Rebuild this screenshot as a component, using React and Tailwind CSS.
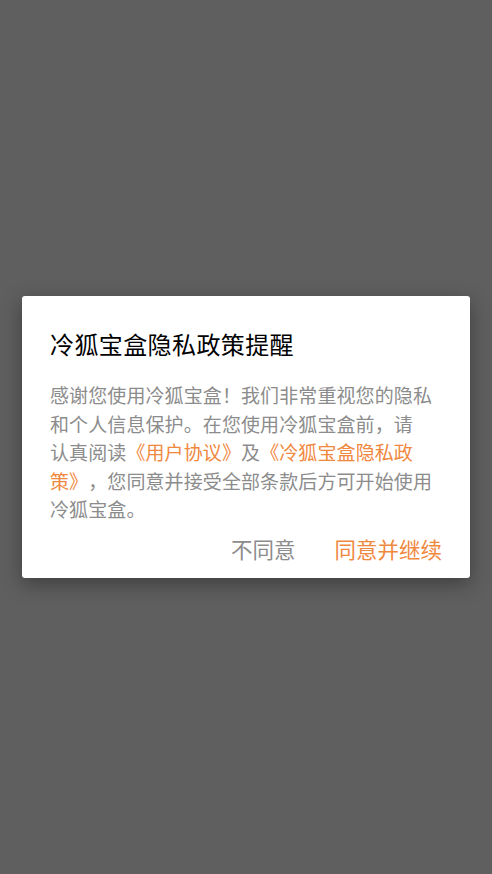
import React from 'react';

const font = { fontFamily: '"Noto Sans CJK SC", "Noto Sans", sans-serif' };

export default function App() {
  return (
    <div className="w-[492px] h-[874px] bg-[#5f5f5f] flex flex-col items-center" style={font}>
      <div className="mt-[296px] w-[448px] h-[282px] bg-white rounded-[3px] shadow-[0_6px_20px_rgba(0,0,0,0.35)] flex flex-col px-[28px]">
        <h1 className="mt-[32px] text-[24px] leading-[32px] text-black tracking-[0.4px]">冷狐宝盒隐私政策提醒</h1>
        <p className="mt-[21px] text-[19px] leading-[28.5px] text-[#8c8c8c] tracking-[0.1px] [text-spacing-trim:space-all]">
          感谢您使用冷狐宝盒！我们非常重视您的隐私<br />
          和个人信息保护。在您使用冷狐宝盒前，请<br />
          认真阅读<span className="text-[#f0883e]">《用户协议》</span>及<span className="text-[#f0883e]">《冷狐宝盒隐私政<br />策》</span>，您同意并接受全部条款后方可开始使用<br />
          冷狐宝盒。
        </p>
        <div className="mt-[11px] flex justify-end items-center gap-[39px]">
          <button className="text-[21.5px] leading-[28px] text-[#8c8c8c]">不同意</button>
          <button className="text-[21.5px] leading-[28px] text-[#f0883e]">同意并继续</button>
        </div>
      </div>
    </div>
  );
}
